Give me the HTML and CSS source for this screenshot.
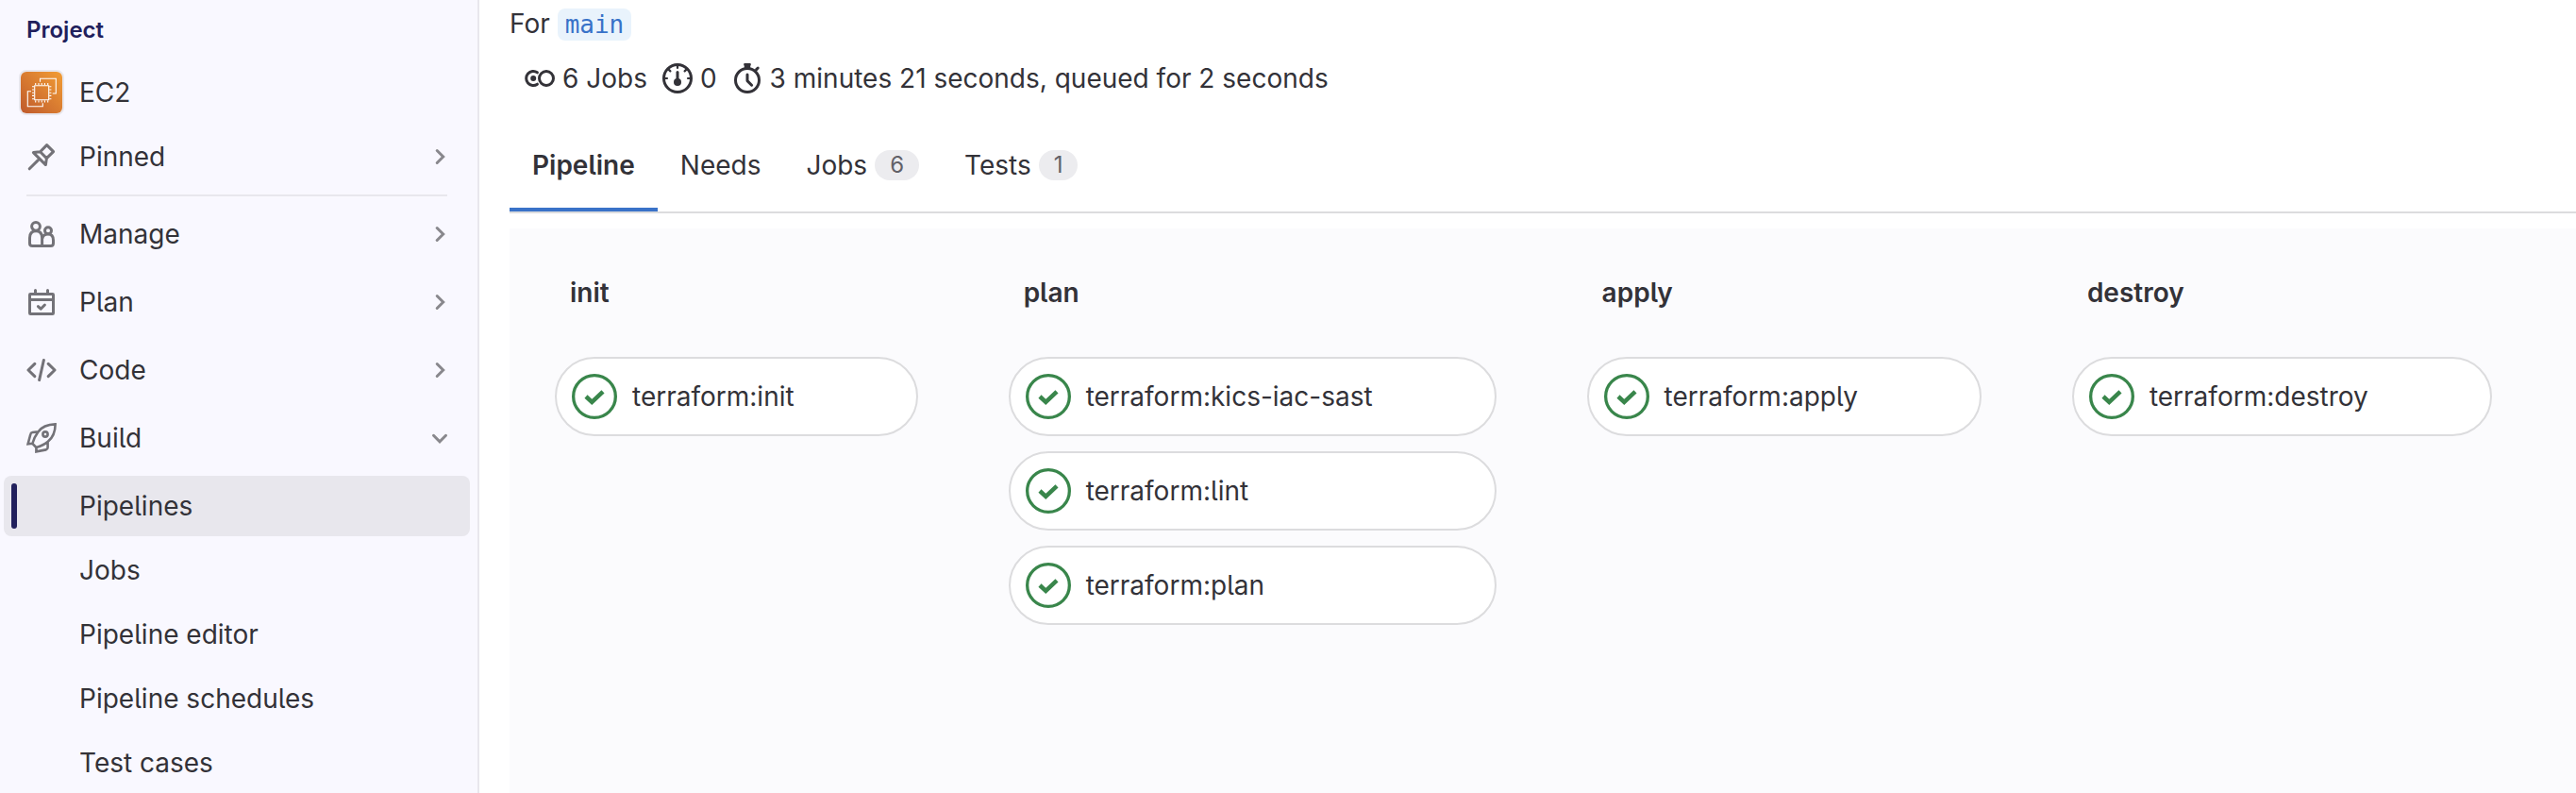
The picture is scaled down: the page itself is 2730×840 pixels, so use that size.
FILE: index.html
```html
<!DOCTYPE html>
<html lang="en">
<head>
    <meta charset="UTF-8">
    <meta name="viewport" content="width=device-width, initial-scale=1.0">
    <title>Pipeline - EC2</title>
    <link rel="stylesheet" href="styles.css">
</head>
<body>
    <!-- Shared icons -->
    <svg class="sprite" aria-hidden="true">
        <symbol id="chevron-right" viewBox="0 0 24 24"><path d="M9.2 5.5 15.7 12l-6.5 6.5"/></symbol>
        <symbol id="chevron-down" viewBox="0 0 24 24"><path d="M5.5 9.3l6.5 6.5 6.5-6.5"/></symbol>
        <symbol id="status-success" viewBox="0 0 16 16">
            <circle cx="8" cy="8" r="7.45" stroke-width="1.1"/>
            <path d="M5 8l2.100 2 3.900-3.700" stroke-width="1.500"/>
        </symbol>
    </svg>

    <aside class="sidebar">
        <h2 class="sidebar-title">Project</h2>
        <nav>
            <a class="nav-item" href="#">
                <span class="nav-icon">
                    <svg class="avatar" viewBox="0 0 44 44" aria-hidden="true">
                        <defs>
                            <linearGradient id="ec2" x1="0" y1="1" x2="1" y2="0">
                                <stop offset="0" stop-color="#bf5a2c"/>
                                <stop offset="1" stop-color="#f29d35"/>
                            </linearGradient>
                        </defs>
                        <rect width="44" height="44" fill="url(#ec2)"/>
                        <path d="M14.7 14.7h15v15h-15zM20.5 10.7V7.3h16.8V23h-3.6M11 20.7H7.3v16h16v-3.4M15.7 14v-2M19 14v-2M22.2 14v-2M25.4 14v-2M28.7 14v-2M15.7 30.4v2M19 30.4v2M22.2 30.4v2M25.4 30.4v2M28.7 30.4v2M14 15.7h-2M14 19h-2M14 22.2h-2M14 25.4h-2M14 28.7h-2M30.4 15.7h2M30.4 19h2M30.4 22.2h2M30.4 25.4h2M30.4 28.7h2" fill="none" stroke="#fff" stroke-width="1.1"/>
                    </svg>
                </span>
                <span class="nav-label">EC2</span>
            </a>
            <button class="nav-item" type="button">
                <svg class="icon" viewBox="0 0 16 16" aria-hidden="true"><path d="M1.6 14.4l4.6-4.6M10.8 1.8l3.5 3.5-3.6 3.5-.5 3.5-6.5-6.5 3.6-.4zM7.3 5.4l3.4 3.4"/></svg>
                <span class="nav-label">Pinned</span>
                <svg class="chevron" aria-hidden="true"><use href="#chevron-right"/></svg>
            </button>
            <hr class="nav-divider">
            <ul class="nav-sections">
                <li>
                    <button class="nav-item" type="button">
                        <svg class="icon" viewBox="0 0 16 16" aria-hidden="true"><circle cx="5" cy="3.9" r="2.2"/><circle cx="11.5" cy="6.1" r="1.75"/><path d="M1.75 10c0-2.3 1.2-3.6 3.3-3.6S8.3 7.7 8.3 10v4.25H3.2c-.9 0-1.45-.5-1.45-1.4zM8.3 14.25h4.6c.9 0 1.35-.5 1.35-1.35v-1.6c0-2.1-1-3.3-2.8-3.3-1.6 0-2.7.9-3 2.2"/></svg>
                        <span class="nav-label">Manage</span>
                        <svg class="chevron" aria-hidden="true"><use href="#chevron-right"/></svg>
                    </button>
                </li>
                <li>
                    <button class="nav-item" type="button">
                        <svg class="icon" viewBox="0 0 16 16" aria-hidden="true"><rect x="1.75" y="3.75" width="12.5" height="10.5" rx=".4"/><path d="M1.75 6.75h12.5M4.75 1.8v1.7M11.25 1.8v1.7M6.2 10.3l1.4 1.3 2.1-2.1"/></svg>
                        <span class="nav-label">Plan</span>
                        <svg class="chevron" aria-hidden="true"><use href="#chevron-right"/></svg>
                    </button>
                </li>
                <li>
                    <button class="nav-item" type="button">
                        <svg class="icon" viewBox="0 0 16 16" aria-hidden="true"><path d="M4.4 4.7L1 8l3.4 3.3M11.6 4.7L15 8l-3.4 3.3M9.2 2.7L6.8 13.3"/></svg>
                        <span class="nav-label">Code</span>
                        <svg class="chevron" aria-hidden="true"><use href="#chevron-right"/></svg>
                    </button>
                </li>
                <li>
                    <button class="nav-item" type="button" aria-expanded="true">
                        <svg class="icon icon-rocket" viewBox="0 0 16 16" aria-hidden="true"><path d="M15.3.7C11.3.8 8.2 2 6.2 4.7 4.7 6.7 3.8 8.5 3.2 10.9l2 2.1c2.5-.7 4.4-1.5 6.2-3.1C14 7.7 15.3 4.7 15.3.7zM6.2 4.7l-3 .3c-.5.1-.9.4-1 .9L.8 11.1l2.4-.2M11.3 10v3c0 .6-.4 1-.9 1.2l-5.2 1V13"/><circle cx="10" cy="6" r="1.3"/></svg>
                        <span class="nav-label">Build</span>
                        <svg class="chevron" aria-hidden="true"><use href="#chevron-down"/></svg>
                    </button>
                    <div class="subnav">
                        <a class="nav-item active" href="#" aria-current="page">Pipelines</a>
                        <a class="nav-item" href="#">Jobs</a>
                        <a class="nav-item" href="#">Pipeline editor</a>
                        <a class="nav-item" href="#">Pipeline schedules</a>
                        <a class="nav-item" href="#">Test cases</a>
                    </div>
                </li>
            </ul>
        </nav>
    </aside>

    <main class="content">
        <div class="ref-line">For <a class="ref" href="#">main</a></div>

        <div class="stats">
            <span class="stat">
                <svg class="icon" viewBox="0 0 16 16" aria-hidden="true"><path d="M6.7 4.9a3.75 3.75 0 1 0 0 6.2"/><circle cx="11.5" cy="8" r="3.75"/><circle class="solid" cx="4.6" cy="8" r="1.5"/></svg>
                6 Jobs
            </span>
            <span class="stat">
                <svg class="icon" viewBox="0 0 16 16" aria-hidden="true"><circle cx="8" cy="8" r="7.25"/><path d="M8 1v1.5M1 8h1.5M13.5 8H15M3.3 3.3l.9.9M12.7 3.3l-.9.9" stroke-width="1.1"/><path d="M8 4.7V9"/><circle class="solid" cx="8" cy="10" r="2"/></svg>
                0
            </span>
            <span class="stat">
                <svg class="icon" viewBox="0 0 16 16" aria-hidden="true"><circle cx="8" cy="9" r="6.25"/><path d="M8 6v3.3l2.3 2.3M12.8 3.3l.8-.8"/><path class="solid" d="M6.7 0h2.6a.6.6 0 0 1 .6.7L9.6 1.5V2.7H6.4V1.5L6.1.7A.6.6 0 0 1 6.7 0z"/></svg>
                3 minutes 21 seconds, queued for 2 seconds
            </span>
        </div>

        <div class="tabs" role="tablist">
            <button class="tab active" type="button" role="tab" aria-selected="true">Pipeline</button>
            <button class="tab" type="button" role="tab">Needs</button>
            <button class="tab" type="button" role="tab">Jobs <span class="badge">6</span></button>
            <button class="tab" type="button" role="tab">Tests <span class="badge">1</span></button>
        </div>

        <div class="graph">
            <section class="stage">
                <h3>init</h3>
                <a class="job" href="#"><svg class="status" aria-hidden="true"><use href="#status-success"/></svg>terraform:init</a>
            </section>
            <section class="stage">
                <h3>plan</h3>
                <a class="job" href="#"><svg class="status" aria-hidden="true"><use href="#status-success"/></svg>terraform:kics-iac-sast</a>
                <a class="job" href="#"><svg class="status" aria-hidden="true"><use href="#status-success"/></svg>terraform:lint</a>
                <a class="job" href="#"><svg class="status" aria-hidden="true"><use href="#status-success"/></svg>terraform:plan</a>
            </section>
            <section class="stage">
                <h3>apply</h3>
                <a class="job" href="#"><svg class="status" aria-hidden="true"><use href="#status-success"/></svg>terraform:apply</a>
            </section>
            <section class="stage">
                <h3>destroy</h3>
                <a class="job" href="#"><svg class="status" aria-hidden="true"><use href="#status-success"/></svg>terraform:destroy</a>
            </section>
        </div>
    </main>
</body>
</html>
```
FILE: styles.css
```css
* {
    box-sizing: border-box;
}
body {
    margin: 0;
    display: flex;
    height: 100vh;
    overflow: hidden;
    background-color: #fff;
    color: #333238;
    font-family: Inter, "Noto Sans", sans-serif;
    font-size: 28px;
    line-height: 40px;
    font-feature-settings: "cv05";
}
a {
    color: inherit;
    text-decoration: none;
}
button {
    border: none;
    background: none;
    color: inherit;
    font: inherit;
    font-feature-settings: inherit;
    text-align: left;
    cursor: pointer;
}
.sprite {
    display: none;
}
.icon {
    flex: none;
    width: 32px;
    height: 32px;
    fill: none;
    stroke: currentColor;
    stroke-width: 1.5;
    stroke-linecap: round;
    stroke-linejoin: round;
}
.icon .solid {
    fill: currentColor;
    stroke: none;
}

/* Sidebar */
.sidebar {
    flex: none;
    width: 508px;
    padding: 12px 8px 0 4px;
    background-color: #f9f8ff;
    border-right: 2px solid #e8e7ed;
}
.sidebar-title {
    margin: 0 0 14px;
    padding-left: 24px;
    color: #21205c;
    font-size: 24px;
    font-weight: 600;
    line-height: 40px;
}
.nav-item {
    display: flex;
    align-items: center;
    gap: 24px;
    width: 100%;
    height: 64px;
    margin-bottom: 4px;
    padding: 0 20px 0 24px;
    border-radius: 8px;
}
.nav-item .icon {
    color: #737278;
}
.nav-item .icon-rocket {
    stroke-width: 1.3;
    stroke-linejoin: miter;
}
.nav-icon {
    display: flex;
    justify-content: center;
    width: 32px;
}
.avatar {
    flex: none;
    width: 48px;
    height: 48px;
    border: 2px solid #e8e7ed;
    border-radius: 8px;
}
.nav-label {
    flex: 1;
}
.chevron {
    flex: none;
    width: 24px;
    height: 24px;
    fill: none;
    stroke: #89888d;
    stroke-width: 3;
    stroke-linecap: round;
}
.nav-divider {
    height: 2px;
    margin: 8px 24px 8px 24px;
    border: none;
    background-color: #e8e7ed;
}
.nav-sections {
    display: flex;
    flex-direction: column;
    gap: 4px;
    margin: 0;
    padding: 0;
    list-style: none;
}
.subnav {
    padding-top: 4px;
}
.subnav .nav-item {
    padding-left: 80px;
}
.subnav .active {
    position: relative;
    background-color: #e8e7ed;
}
.subnav .active::before {
    content: "";
    position: absolute;
    left: 8px;
    top: 8px;
    bottom: 8px;
    width: 6px;
    border-radius: 3px;
    background-color: #21205c;
}

/* Main column */
.content {
    flex: 1;
    display: flex;
    flex-direction: column;
    min-width: 0;
    padding: 5px 0 0 32px;
}
.ref {
    padding: 2px 8px;
    border-radius: 8px;
    background-color: #e9f3fc;
    color: #3872c8;
    font-family: "DejaVu Sans Mono", monospace;
    font-size: 26px;
}
.stats {
    display: flex;
    gap: 16px;
    padding: 17px 16px 0;
}
.stat {
    display: flex;
    align-items: center;
    gap: 8px;
}
.tabs {
    display: flex;
    margin-top: 23px;
    border-bottom: 2px solid #dcdcde;
}
.tab {
    display: flex;
    align-items: center;
    gap: 8px;
    height: 98px;
    padding: 4px 24px 0;
    border-bottom: 4px solid transparent;
}
.tab.active {
    border-bottom-color: #3a72c8;
    font-weight: 600;
}
.badge {
    padding: 0 16px;
    border-radius: 16px;
    background-color: #ececef;
    color: #626168;
    font-size: 24px;
    line-height: 32px;
}

/* Pipeline graph */
.graph {
    flex: 1;
    display: flex;
    gap: 96px;
    margin-top: 16px;
    padding: 48px;
    background-color: #fbfbfd;
}
.stage {
    display: flex;
    flex-direction: column;
    gap: 16px;
}
.stage h3 {
    margin: 0 0 32px;
    padding-left: 16px;
    font-size: 28px;
    font-weight: 600;
    line-height: 40px;
}
.job {
    display: flex;
    align-items: center;
    gap: 16px;
    height: 84px;
    padding: 0 129px 0 16px;
    border: 2px solid #dcdcde;
    border-radius: 42px;
    background-color: #fff;
    white-space: nowrap;
}
.status {
    flex: none;
    width: 48px;
    height: 48px;
    fill: none;
    stroke: #39864b;
}
```
